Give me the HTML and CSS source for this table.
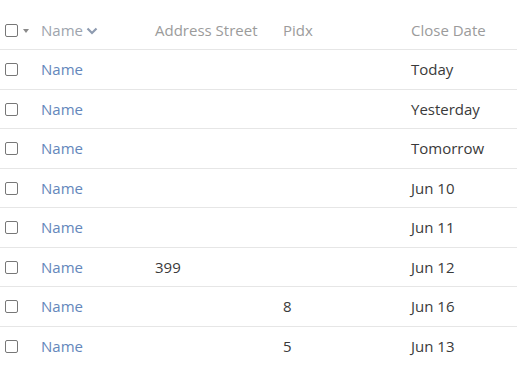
FILE: index.html
```html
<!DOCTYPE html>
<html>
<head>
<meta charset="utf-8">
<link rel="stylesheet" href="styles.css">
</head>
<body>
<div class="table">
  <div class="row head">
    <div class="cell sel">
      <span class="box"></span>
      <span class="caret"></span>
    </div>
    <div class="cell name-h">Name
      <svg class="chev" width="12" height="8" viewBox="0 0 12 8"><path d="M1.5 1.5 L6 6 L10.5 1.5" fill="none" stroke="#8e9bb0" stroke-width="2.2"/></svg>
    </div>
    <div class="cell">Address Street</div>
    <div class="cell">Pidx</div>
    <div class="cell">Close Date</div>
  </div>
  <div class="row"><div class="cell sel"><span class="box"></span></div><div class="cell name">Name</div><div class="cell"></div><div class="cell"></div><div class="cell">Today</div></div>
  <div class="row"><div class="cell sel"><span class="box"></span></div><div class="cell name">Name</div><div class="cell"></div><div class="cell"></div><div class="cell">Yesterday</div></div>
  <div class="row"><div class="cell sel"><span class="box"></span></div><div class="cell name">Name</div><div class="cell"></div><div class="cell"></div><div class="cell">Tomorrow</div></div>
  <div class="row"><div class="cell sel"><span class="box"></span></div><div class="cell name">Name</div><div class="cell"></div><div class="cell"></div><div class="cell">Jun 10</div></div>
  <div class="row"><div class="cell sel"><span class="box"></span></div><div class="cell name">Name</div><div class="cell"></div><div class="cell"></div><div class="cell">Jun 11</div></div>
  <div class="row"><div class="cell sel"><span class="box"></span></div><div class="cell name">Name</div><div class="cell">399</div><div class="cell"></div><div class="cell">Jun 12</div></div>
  <div class="row"><div class="cell sel"><span class="box"></span></div><div class="cell name">Name</div><div class="cell"></div><div class="cell">8</div><div class="cell">Jun 16</div></div>
  <div class="row"><div class="cell sel"><span class="box"></span></div><div class="cell name">Name</div><div class="cell"></div><div class="cell">5</div><div class="cell">Jun 13</div></div>
</div>
</body>
</html>
```
FILE: styles.css
```css
html, body {
  margin: 0;
  padding: 0;
  background: #fff;
}
body {
  font-family: "Open Sans", "Liberation Sans", sans-serif;
  font-size: 15px;
  color: #3a3a3a;
}
.table {
  padding-top: 10px;
}
.row {
  display: grid;
  grid-template-columns: 36px 114px 128px 128px 1fr;
  padding-left: 5px;
  height: 39.5px;
  box-sizing: border-box;
  align-items: center;
  border-bottom: 1px solid #e6e6e6;
}
.row:last-child {
  border-bottom: none;
}
.row.head {
  height: 40px;
  color: #9b9b9b;
  padding-top: 1px;
}
.cell {
  display: flex;
  align-items: center;
  white-space: nowrap;
}
.box {
  display: inline-block;
  width: 11px;
  height: 11px;
  border: 1px solid #777;
  border-radius: 2px;
  box-sizing: content-box;
  margin-top: 1px;
}
.caret {
  display: inline-block;
  width: 0;
  height: 0;
  border-left: 3.5px solid transparent;
  border-right: 3.5px solid transparent;
  border-top: 4px solid #8a8a8a;
  margin-left: 5px;
  margin-top: 2px;
}
.name-h {
  color: #9ea4ad;
}
.chev {
  margin-left: 3px;
  margin-top: 1px;
}
.name {
  color: #6487bb;
}
```
